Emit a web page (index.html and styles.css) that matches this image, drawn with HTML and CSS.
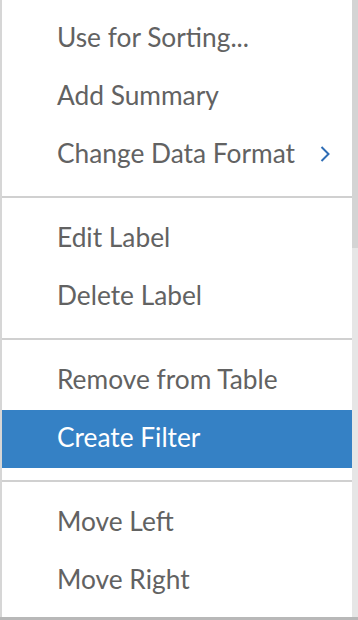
FILE: index.html
```html
<!DOCTYPE html>
<html>
<head>
<meta charset="utf-8">
<link rel="stylesheet" href="styles.css">
</head>
<body>
<div class="frame">
  <div class="edge-left"></div>
  <div class="menu">
    <div class="item">Use for Sorting...</div>
    <div class="item">Add Summary</div>
    <div class="item has-sub">Change Data Format
      <svg class="chev" width="10" height="18" viewBox="0 0 10 18"><path d="M1.5 2 L8.5 9 L1.5 16" fill="none" stroke="#2f6db5" stroke-width="2"/></svg>
    </div>
    <div class="sep"></div>
    <div class="item">Edit Label</div>
    <div class="item">Delete Label</div>
    <div class="sep"></div>
    <div class="item">Remove from Table</div>
    <div class="item active">Create Filter</div>
    <div class="sep"></div>
    <div class="item">Move Left</div>
    <div class="item">Move Right</div>
  </div>
  <div class="scroll"><div class="thumb"></div></div>
</div>
</body>
</html>
```
FILE: styles.css
```css
html, body {
  margin: 0;
  padding: 0;
  background: #bdbdbd;
}
.frame {
  display: flex;
  width: 358px;
  height: 617px;
  border-bottom: 3px solid #b8b8b8;
}
.edge-left {
  width: 2px;
  background: #d6d6d6;
}
.menu {
  width: 350px;
  background: #ffffff;
  padding-top: 10px;
  box-sizing: border-box;
  font-family: "Source Sans Pro", "Lato", "Noto Sans", sans-serif;
  font-size: 26.3px;
  color: #626262;
}
.item {
  height: 58px;
  display: flex;
  align-items: center;
  padding-left: 55px;
  padding-bottom: 4px;
  box-sizing: border-box;
  position: relative;
}
.item.active {
  background: #3581c5;
  color: #ffffff;
}
.chev {
  position: absolute;
  left: 318px;
  top: 19px;
}
.sep {
  height: 2px;
  background: #d0d0d0;
  margin: 12px 0;
}
.scroll {
  width: 6px;
  background: #e6e6e6;
  display: flex;
  flex-direction: column;
}
.thumb {
  height: 248px;
  background: #d4d4d4;
}
```
